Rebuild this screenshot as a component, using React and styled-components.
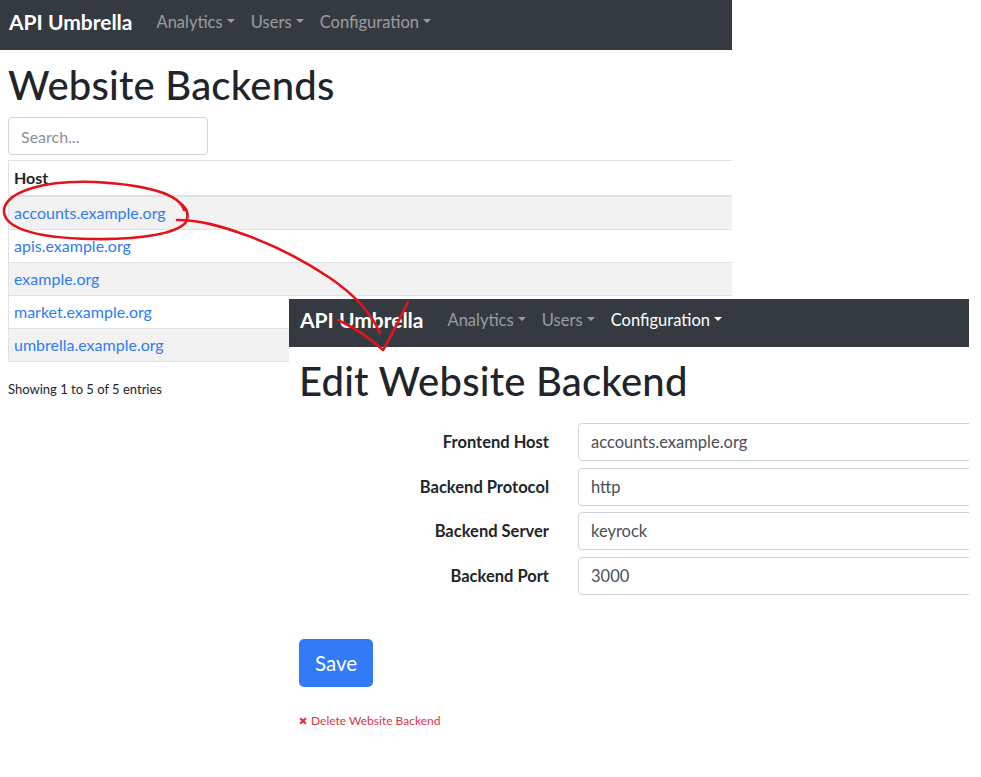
import React from 'react';
import styled, { createGlobalStyle } from 'styled-components';

const Global = createGlobalStyle`
  html, body { margin: 0; padding: 0; background: #fff; }
  body { font-family: Lato, "Open Sans", sans-serif; color: #212529; }
  * { box-sizing: border-box; }
`;

const Canvas = styled.div`
  position: relative;
  width: 981px;
  height: 777px;
  overflow: hidden;
  background: #fff;
`;

const Shot = styled.div`
  width: ${p => p.$w}px;
  background: #fff;
`;

const OverlayShot = styled(Shot)`
  position: absolute;
  left: 289px;
  top: 299px;
  height: 478px;
  overflow: hidden;
`;

const Navbar = styled.nav`
  display: flex;
  align-items: center;
  height: ${p => p.$h}px;
  background: #343a40;
  padding-left: ${p => p.$pad}px;
  padding-bottom: ${p => p.$lift}px;
`;

const Brand = styled.span`
  font-size: 21px;
  font-weight: 700;
  color: #fff;
  margin-right: 16px;
  white-space: nowrap;
`;

const NavLink = styled.span`
  font-size: 16.5px;
  color: ${p => (p.$active ? '#fff' : 'rgba(255,255,255,0.5)')};
  padding: 0 8px;
  white-space: nowrap;
  &::after {
    content: '';
    display: inline-block;
    margin-left: 0.255em;
    vertical-align: 0.255em;
    border-top: 0.3em solid;
    border-right: 0.3em solid transparent;
    border-left: 0.3em solid transparent;
  }
`;

const Body = styled.div`
  padding-left: ${p => p.$pad}px;
`;

const Title = styled.h1`
  font-size: 40px;
  font-weight: 500;
  line-height: 1.2;
  letter-spacing: 0.2px;
  margin: ${p => p.$mt}px 0 8px;
  white-space: nowrap;
`;

const Search = styled.input`
  display: block;
  width: 200px;
  height: 38px;
  border: 1px solid #ced4da;
  border-radius: 4px;
  padding: 6px 12px;
  font: inherit;
  font-size: 16px;
  color: #495057;
  &::placeholder { color: #8a9096; }
`;

const Table = styled.table`
  margin-top: 5px;
  width: 100%;
  border-collapse: collapse;
  border-left: 1px solid #dee2e6;
`;

const Th = styled.th`
  text-align: left;
  font-size: 16px;
  font-weight: 700;
  line-height: 24px;
  padding: 5px 5px;
  border-top: 1px solid #dee2e6;
  border-bottom: 2px solid #dee2e6;
`;

const Tr = styled.tr`
  background: ${p => (p.$striped ? '#f2f2f2' : '#fff')};
`;

const Td = styled.td`
  font-size: 16px;
  line-height: 24px;
  padding: 4px 5px;
  border-top: 1px solid #dee2e6;
  border-bottom: 1px solid #dee2e6;
`;

const Link = styled.a`
  color: #307cf6;
  text-decoration: none;
`;

const Info = styled.div`
  margin-top: 18px;
  font-size: 13px;
  line-height: 19px;
`;

const Form = styled.div`
  display: flex;
  flex-direction: column;
  gap: 6.7px;
  margin-top: 18px;
`;

const FormRow = styled.div`
  display: grid;
  grid-template-columns: 250px 420px;
  column-gap: 29px;
  align-items: center;
`;

const Label = styled.label`
  text-align: right;
  font-size: 16.5px;
  font-weight: 700;
  white-space: nowrap;
`;

const Field = styled.div`
  height: 38px;
  border: 1px solid #ced4da;
  border-radius: 4px;
  padding: 0 12px;
  display: flex;
  align-items: center;
  font-size: 16.5px;
  color: #495057;
`;

const SaveButton = styled.button`
  margin-top: 44px;
  display: block;
  height: 48px;
  padding: 0 16px;
  border: none;
  border-radius: 5px;
  background: #337af7;
  color: #fff;
  font: inherit;
  font-size: 20.5px;
`;

const DeleteLink = styled.a`
  display: flex;
  align-items: center;
  gap: 4px;
  margin-top: 25px;
  font-size: 12px;
  line-height: 18px;
  color: #dc3545;
  text-decoration: none;
`;

const XIcon = styled.svg`
  width: 8px;
  height: 8px;
  flex: none;
`;

const Annotation = styled.svg`
  position: absolute;
  left: 0;
  top: 0;
  pointer-events: none;
`;

const Stroke = styled.path`
  fill: none;
  stroke: #e3121b;
  stroke-width: 2.6;
  stroke-linecap: round;
  stroke-linejoin: round;
`;

const hosts = [
  'accounts.example.org',
  'apis.example.org',
  'example.org',
  'market.example.org',
  'umbrella.example.org',
];

const fields = [
  ['Frontend Host', 'accounts.example.org'],
  ['Backend Protocol', 'http'],
  ['Backend Server', 'keyrock'],
  ['Backend Port', '3000'],
];

function TopNav({ h, pad, active }) {
  return (
    <Navbar $h={h} $pad={pad} $lift={7}>
      <Brand>API Umbrella</Brand>
      <NavLink>Analytics</NavLink>
      <NavLink>Users</NavLink>
      <NavLink $active={active}>Configuration</NavLink>
    </Navbar>
  );
}

export default function App() {
  return (
    <>
      <Global />
      <Canvas>
        <Shot $w={732}>
          <TopNav h={50} pad={9} />
          <Body $pad={8}>
            <Title $mt={11}>Website Backends</Title>
            <Search placeholder="Search..." />
            <Table>
              <thead>
                <tr><Th>Host</Th></tr>
              </thead>
              <tbody>
                {hosts.map((h, i) => (
                  <Tr key={h} $striped={i % 2 === 0}>
                    <Td><Link href="#">{h}</Link></Td>
                  </Tr>
                ))}
              </tbody>
            </Table>
            <Info>Showing 1 to 5 of 5 entries</Info>
          </Body>
        </Shot>

        <OverlayShot $w={680}>
          <TopNav h={48} pad={11} active />
          <Body $pad={10}>
            <Title $mt={10}>Edit Website Backend</Title>
            <Form>
              {fields.map(([l, v]) => (
                <FormRow key={l}>
                  <Label>{l}</Label>
                  <Field>{v}</Field>
                </FormRow>
              ))}
            </Form>
            <SaveButton>Save</SaveButton>
            <DeleteLink href="#">
              <XIcon viewBox="0 0 10 10">
                <path d="M1.5 1.5 L8.5 8.5 M8.5 1.5 L1.5 8.5" stroke="currentColor" strokeWidth="2.8" strokeLinecap="butt" />
              </XIcon>
              Delete Website Backend
            </DeleteLink>
          </Body>
        </OverlayShot>

        <Annotation width="981" height="777" viewBox="0 0 981 777">
          <Stroke d="M 184 210 C 180 195, 150 185, 95 182 C 45 180, 8 191, 4 209 C 2 227, 32 238, 92 239 C 142 240, 178 233, 186 222 C 189 215, 187 208, 180 203" />
          <Stroke d="M 177 220 C 200 220, 220 226, 240 233 C 270 243, 300 258, 330 278 C 355 295, 372 315, 380 333" />
          <Stroke d="M 338 320 C 355 328, 370 338, 383 350 C 392 335, 400 318, 408 302" />
        </Annotation>
      </Canvas>
    </>
  );
}
